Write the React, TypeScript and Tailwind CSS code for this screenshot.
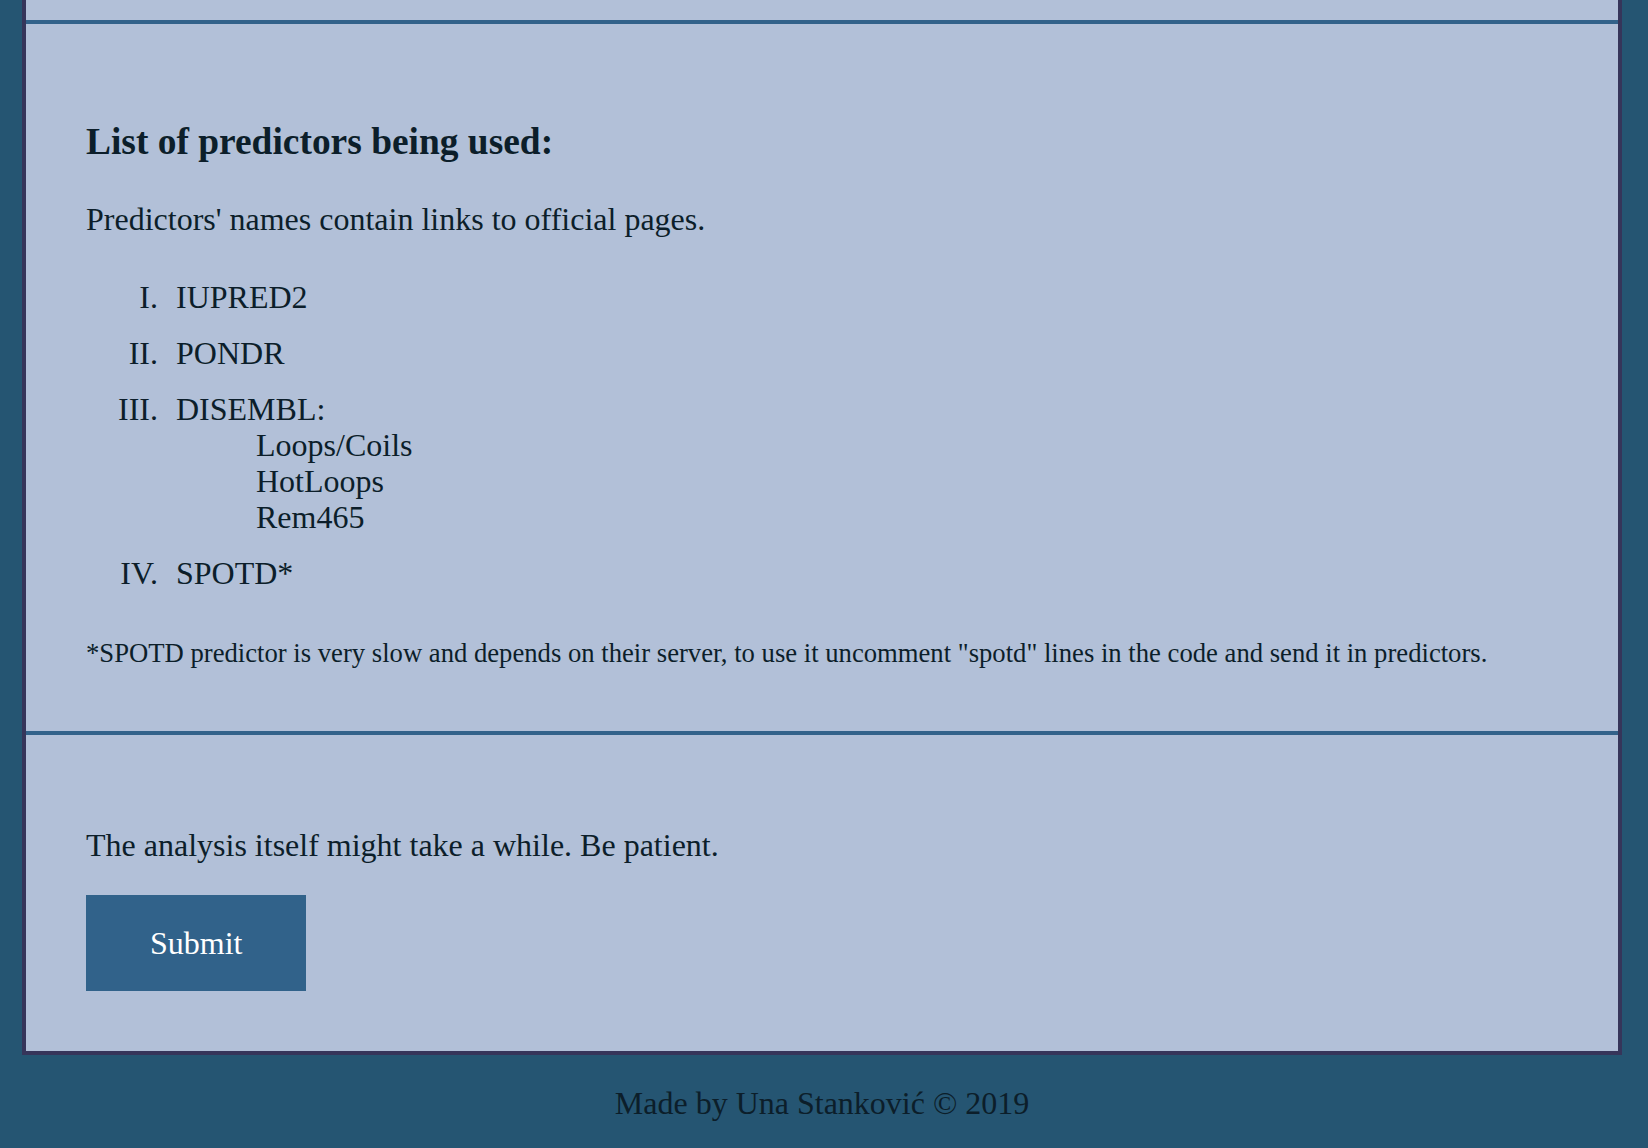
const predictors = [
  { name: 'IUPRED2' },
  { name: 'PONDR' },
  { name: 'DISEMBL:', subs: ['Loops/Coils', 'HotLoops', 'Rem465'] },
  { name: 'SPOTD*' },
];

const App = () => {
  return (
    <div className="min-h-screen bg-[#255572] font-['Liberation_Serif','Times_New_Roman',serif] text-[32px] leading-[36px] text-[#0c1e2a]">
      <div className="ml-[22px] w-[1600px] border-x-4 border-b-4 border-[#36355a] bg-[#b2c0d8]">
        {/* tail of the section above, scrolled out of view */}
        <div className="h-[24px] border-b-4 border-[#32628a]" />

        <div className="border-b-4 border-[#32628a] p-[60px]">
          <h3 className="mt-[37.44px] mb-[37.44px] text-[37.44px] font-bold leading-[42px]">List of predictors being used:</h3>
          <p className="my-[32px]">Predictors' names contain links to official pages.</p>
          <ol className="my-[32px] list-outside list-[upper-roman] pl-[80px]">
            {predictors.map((p) => (
              <li key={p.name} className="p-[10px]">
                <a className="cursor-pointer">{p.name}</a>
                {p.subs && (
                  <div className="pl-[80px]">
                    {p.subs.map((s) => (
                      <div key={s}>{s}</div>
                    ))}
                  </div>
                )}
              </li>
            ))}
          </ol>
          <div>
            <small className="text-[26.67px]">
              *SPOTD predictor is very slow and depends on their server, to use it uncomment "spotd" lines in the code and send it in predictors.
            </small>
          </div>
        </div>

        <div className="p-[60px]">
          <p className="my-[32px]">The analysis itself might take a while. Be patient.</p>
          <button className="block bg-[#31628a] px-[64px] py-[30px] text-[32px] leading-[36px] text-white">Submit</button>
        </div>
      </div>

      <footer className="ml-[22px] w-[1600px] pt-[30px] text-center">Made by Una Stanković © 2019</footer>
    </div>
  );
};

export default App;
